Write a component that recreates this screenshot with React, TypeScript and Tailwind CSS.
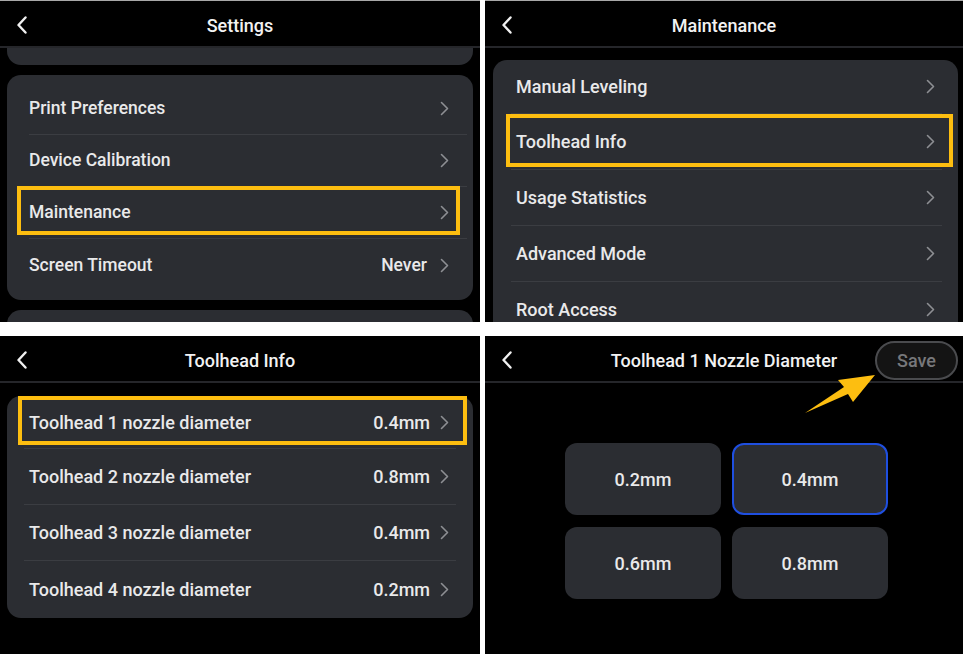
import React from 'react';

const YELLOW = 'border-[#fdbe10]';

const BackIcon = () => (
  <svg width="12" height="18" viewBox="0 0 12 18">
    <path d="M9.5 1.5 L2.5 9 L9.5 16.5" fill="none" stroke="#f0f0f0" strokeWidth="2.4" strokeLinecap="round" strokeLinejoin="round" />
  </svg>
);

const Chevron = () => (
  <svg width="9" height="15" viewBox="0 0 9 15" className="shrink-0">
    <path d="M1.5 1.5 L7.5 7.5 L1.5 13.5" fill="none" stroke="#8d8f93" strokeWidth="1.6" strokeLinecap="round" strokeLinejoin="round" />
  </svg>
);

interface HeaderProps {
  title: string;
  right?: React.ReactNode;
}

const Header: React.FC<HeaderProps> = ({ title, right }) => (
  <div className="grid grid-cols-[1fr_auto_1fr] items-center h-[47px] pt-[3px] border-b-2 border-[#25262a]">
    <div className="pl-[16px] flex items-center">
      <BackIcon />
    </div>
    <p className="text-[18px] font-medium text-[#f2f2f2]">{title}</p>
    <div className="flex justify-end pr-[5px]">{right}</div>
  </div>
);

interface RowProps {
  label: string;
  value?: string;
  last?: boolean;
  className: string;
  box?: string;
  size?: string;
  gap?: string;
}

const Row: React.FC<RowProps> = ({ label, value, last, className, box, size = 'text-[18px]', gap = 'gap-[10px]' }) => (
  <div className={`relative flex items-center justify-between ${className} ${last ? '' : 'border-b border-[#3b3d42]'}`}>
    <span className={`${size} font-medium text-[#e9e9ea]`}>{label}</span>
    <div className={`flex items-center ${gap}`}>
      {value && <span className={`${size} font-medium text-[#e9e9ea]`}>{value}</span>}
      <Chevron />
    </div>
    {box && <div className={`absolute border-4 ${YELLOW} ${box}`}></div>}
  </div>
);

const settingsRow = 'h-[52px] ml-[22px] mr-[6px] pr-[18px]';

const SettingsPanel = () => (
  <div className="h-[322px] overflow-hidden bg-black border-t border-[#a8a8a8]">
    <Header title="Settings" />
    <div className="mx-[7px] h-[17px] rounded-b-[14px] bg-[#2b2d32]"></div>
    <div className="mx-[7px] mt-[10px] pt-[8px] pb-[9px] rounded-[14px] bg-[#2b2d32]">
      <Row label="Print Preferences" size="text-[17.5px]" className={settingsRow} />
      <Row label="Device Calibration" size="text-[17.5px]" className={settingsRow} />
      <Row label="Maintenance" size="text-[17.5px]" className={settingsRow} box="-left-[12px] right-[7px] -top-px bottom-[3px]" />
      <Row label="Screen Timeout" value="Never" last size="text-[17.5px]" gap="gap-[13px]" className={settingsRow} />
    </div>
    <div className="mx-[7px] mt-[10px] h-[40px] rounded-t-[14px] bg-[#2b2d32]"></div>
  </div>
);

const maintRow = 'ml-[18px] mr-[16px] pl-[5px] pr-[7px]';

const MaintenancePanel = () => (
  <div className="h-[322px] overflow-hidden bg-black border-t border-[#a8a8a8]">
    <Header title="Maintenance" />
    <div className="ml-[8px] mr-[5px] mt-[12px] rounded-t-[14px] bg-[#2b2d32]">
      <Row label="Manual Leveling" className={`h-[54px] ${maintRow}`} />
      <Row label="Toolhead Info" className={`h-[56px] ${maintRow}`} box="-left-[5px] -right-[11px] top-0 bottom-[2px]" />
      <Row label="Usage Statistics" className={`h-[56px] ${maintRow}`} />
      <Row label="Advanced Mode" className={`h-[56px] ${maintRow}`} />
      <Row label="Root Access" className={`h-[56px] ${maintRow}`} />
    </div>
  </div>
);

const nozzles = [
  { n: 1, v: '0.4mm' },
  { n: 2, v: '0.8mm' },
  { n: 3, v: '0.4mm' },
  { n: 4, v: '0.2mm' },
];

const ToolheadPanel = () => (
  <div className="h-[318px] overflow-hidden bg-black">
    <Header title="Toolhead Info" />
    <div className="mx-[7px] mt-[13px] pb-px rounded-[14px] bg-[#2b2d32]">
      {nozzles.map((t, i) => (
        <Row
          key={t.n}
          label={`Toolhead ${t.n} nozzle diameter`}
          value={t.v}
          last={i === nozzles.length - 1}
          className={`${i === 0 ? 'h-[53px]' : 'h-[56px]'} ml-[17px] mr-[17px] pl-[5px] pr-[7px]`}
          box={i === 0 ? '-left-[6px] -right-[11px] top-0 bottom-[3px]' : undefined}
        />
      ))}
    </div>
  </div>
);

const sizes = ['0.2mm', '0.4mm', '0.6mm', '0.8mm'];

const NozzlePanel = () => (
  <div className="relative h-[318px] overflow-hidden bg-black">
    <Header
      title="Toolhead 1 Nozzle Diameter"
      right={
        <button className="w-[83px] h-[39px] rounded-full border-2 border-[#4a4b4e] bg-[#141414] text-[18px] font-medium text-[#77787b]">
          Save
        </button>
      }
    />
    <div className="flex justify-center pl-[5px] mt-[60px]">
      <div className="grid grid-cols-[156px_156px] gap-x-[11px] gap-y-[12px]">
        {sizes.map((s) => (
          <div
            key={s}
            className={`h-[72px] rounded-[12px] bg-[#2b2d32] border-2 flex items-center justify-center text-[18px] font-medium text-[#e9e9ea] ${s === '0.4mm' ? 'border-[#1f4fe0]' : 'border-transparent'}`}
          >
            {s}
          </div>
        ))}
      </div>
    </div>
    {/* annotation arrow pointing at Save */}
    <svg className="absolute left-[318px] top-[36px]" width="76" height="46" viewBox="0 0 76 46">
      <polygon points="2,41 41,15 35,8 72,3 50,30 45,22" fill="#fdbe10" />
    </svg>
  </div>
);

export default function App() {
  return (
    <div className="w-[963px] h-[654px] bg-white grid grid-cols-[480px_478px] grid-rows-[322px_318px] gap-x-[5px] gap-y-[14px] font-['Roboto',sans-serif]">
      <SettingsPanel />
      <MaintenancePanel />
      <ToolheadPanel />
      <NozzlePanel />
    </div>
  );
}
